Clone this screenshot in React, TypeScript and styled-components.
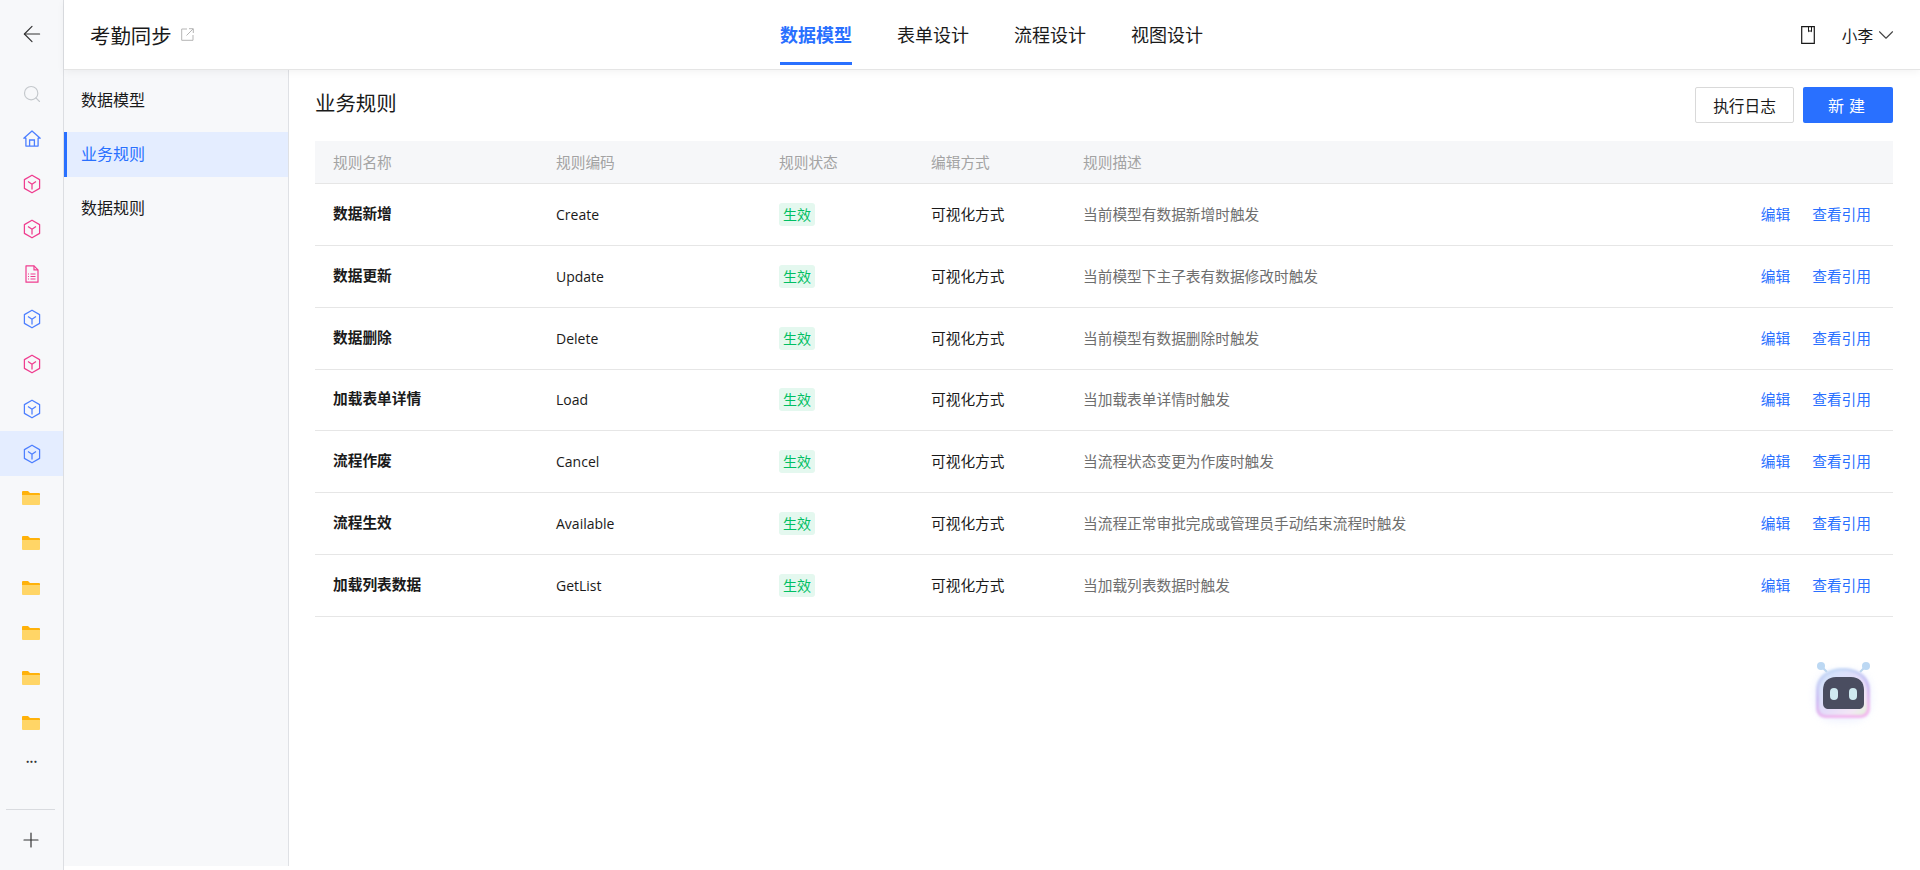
import React from "react";
import styled, { createGlobalStyle } from "styled-components";
import { ArrowLeft, ChevronDown, Plus, Search } from "lucide-react";

const GlobalStyle = createGlobalStyle`
  html, body {
    margin: 0;
    padding: 0;
    height: 100%;
    overflow: hidden;
    background: #fff;
  }
  * { box-sizing: border-box; }
  body {
    font-family: "Noto Sans CJK SC", "Noto Sans", sans-serif;
    color: #1a1a1a;
  }
`;

const Shell = styled.div`
  display: flex;
  width: 1920px;
  height: 870px;
  position: relative;
`;

const Rail = styled.aside`
  width: 64px;
  flex: 0 0 64px;
  height: 100%;
  background: #f7f8fa;
  border-right: 1px solid #dcdee2;
  display: flex;
  flex-direction: column;
`;

const BackBox = styled.div`
  height: 71px;
  flex: 0 0 71px;
  padding-bottom: 3px;
  display: flex;
  align-items: center;
  justify-content: center;
  color: #333;
`;

const RailItem = styled.div<{ $active?: boolean }>`
  height: 45px;
  flex: 0 0 45px;
  display: flex;
  align-items: center;
  justify-content: center;
  background: ${(p) => (p.$active ? "#e4edff" : "transparent")};
`;

const RailDots = styled.div`
  height: 30px;
  font-size: 12px;
  font-weight: 700;
  line-height: 30px;
  text-align: center;
  color: #333;
  margin-top: -3px;
`;

const RailLine = styled.div`
  height: 1px;
  margin: 36px 8px 0 6px;
  background: #d9dbdf;
`;

const RailPlus = styled.div`
  display: flex;
  justify-content: center;
  padding: 18px 2px 0 0;
  color: #333;
`;

const Right = styled.div`
  flex: 1;
  display: flex;
  flex-direction: column;
  min-width: 0;
`;

const Header = styled.header`
  height: 70px;
  flex: 0 0 70px;
  background: #fff;
  border-bottom: 1px solid #e5e5e5;
  box-shadow: 0 2px 8px rgba(0, 0, 0, 0.05);
  position: relative;
  z-index: 2;
  display: grid;
  grid-template-columns: 1fr auto 1fr;
  align-items: center;
  padding: 0 27px 0 26px;
`;

const AppName = styled.div`
  display: flex;
  align-items: center;
  gap: 9px;
  font-size: 20.4px;
  color: #1a1a1a;
`;

const Tabs = styled.nav`
  display: flex;
  gap: 45px;
  height: 100%;
`;

const Tab = styled.div<{ $active?: boolean }>`
  height: 65px;
  line-height: 68px;
  font-size: 18px;
  font-weight: ${(p) => (p.$active ? 700 : 400)};
  color: ${(p) => (p.$active ? "#2970ff" : "#1a1a1a")};
  border-bottom: 3px solid ${(p) => (p.$active ? "#2970ff" : "transparent")};
`;

const UserArea = styled.div`
  display: flex;
  justify-content: flex-end;
  align-items: center;
  font-size: 15.6px;
`;

const UserName = styled.span`
  margin-left: 27px;
`;

const Caret = styled.span`
  display: flex;
  margin-right: -6px;
  color: #444;
`;

const Body = styled.div`
  flex: 0 0 796px;
  display: flex;
  min-height: 0;
`;

const SubNav = styled.div`
  width: 225px;
  flex: 0 0 225px;
  background: #f7f8fa;
  border-right: 1px solid #dfe1e5;
  padding-top: 8px;
  display: flex;
  flex-direction: column;
  gap: 9px;
`;

const SubItem = styled.div<{ $active?: boolean }>`
  height: 45px;
  line-height: 43px;
  font-size: 16px;
  padding-left: ${(p) => (p.$active ? "14px" : "17px")};
  color: ${(p) => (p.$active ? "#2970ff" : "#1a1a1a")};
  background: ${(p) => (p.$active ? "#e4edff" : "transparent")};
  border-left: ${(p) => (p.$active ? "3px solid #2970ff" : "none")};
`;

const Content = styled.main`
  flex: 1;
  min-width: 0;
  padding: 17px 27px 0 26px;
`;

const TitleBar = styled.div`
  display: flex;
  align-items: center;
  height: 36px;
  margin-bottom: 18px;
`;

const Title = styled.h2`
  margin: 0 auto 6px 0;
  font-size: 20.4px;
  font-weight: 400;
  line-height: 32px;
  color: #1a1a1a;
`;

const GhostButton = styled.button`
  width: 99px;
  height: 36px;
  padding: 0;
  background: #fff;
  border: 1px solid #d9d9d9;
  border-radius: 2px;
  font: inherit;
  font-size: 15.7px;
  color: #1a1a1a;
`;

const PrimaryButton = styled.button`
  width: 90px;
  height: 36px;
  margin-left: 9px;
  padding: 0 0 0 2px;
  background: #2970ff;
  border: none;
  border-radius: 2px;
  font: inherit;
  font-size: 16px;
  letter-spacing: 5px;
  color: #fff;
`;

const Row = styled.div<{ $head?: boolean }>`
  display: grid;
  grid-template-columns: 223px 223px 152px 152px 1fr auto;
  align-items: center;
  height: ${(p) => (p.$head ? "43px" : "61.85px")};
  padding: 0 22px 2px 18px;
  font-size: 14.7px;
  background: ${(p) => (p.$head ? "#f6f7f9" : "#fff")};
  color: ${(p) => (p.$head ? "#a3a3a3" : "#1a1a1a")};
  border-bottom: 1px solid #e6e6e6;
`;

const RuleName = styled.div`
  font-weight: 700;
  margin-top: -2px;
`;

const RuleCode = styled.div`
  font-family: "Open Sans", "Noto Sans", sans-serif;
  font-size: 14px;
  margin-top: 2px;
`;

const Badge = styled.span`
  display: block;
  width: 36px;
  height: 23px;
  margin-top: 2px;
  line-height: 22px;
  text-align: center;
  font-size: 14px;
  color: #00bf63;
  background: #e4f8ef;
  border-radius: 3px;
`;

const Desc = styled.div`
  color: #6e6e6e;
`;

const Actions = styled.div`
  display: flex;
  gap: 22px;
`;

const LinkAction = styled.a`
  color: #2970ff;
  text-decoration: none;
`;

const Robot = styled.div`
  position: absolute;
  left: 1803px;
  top: 650px;
  width: 80px;
  height: 80px;
`;

const Cube = ({ color }: { color: string }) => (
  <svg width="18" height="20" viewBox="0 0 18 20" fill="none" stroke={color} strokeWidth="1.25">
    <path d="M9 1.2 16.6 5.6V14.4L9 18.8 1.4 14.4V5.6Z" strokeLinejoin="round" />
    <path d="M9 10.2V15.4M9 10.2 5 7.4M9 10.2 13 7.4" />
  </svg>
);

const HomeIcon = () => (
  <svg width="18" height="17" viewBox="0 0 18 17" fill="none" stroke="#4d7fff" strokeWidth="1.3">
    <path d="M.8 8.2 9 .9l8.2 7.3h-2.1v7.9H2.9V8.2Z" strokeLinejoin="round" />
    <path d="M6.6 16V10h4.8v6" />
  </svg>
);

const FileIcon = () => (
  <svg width="14" height="18" viewBox="0 0 14 18" fill="none" stroke="#ef3d8f" strokeWidth="1.2">
    <path d="M1 .8h8l4 4v12.4H1Z" strokeLinejoin="round" />
    <path d="M9 .8v4h4" />
    <path d="M3 9h1M3 11.5h1M3 14h1M5.5 9h5M5.5 11.5h5M5.5 14h5" />
  </svg>
);

const FolderIcon = () => (
  <svg width="18" height="14" viewBox="0 0 18 14" style={{ marginLeft: -2, marginTop: -2 }}>
    <path d="M0 1a1 1 0 0 1 1-1h5l2 2h9a1 1 0 0 1 1 1v2H0Z" fill="#ffb20a" />
    <path d="M0 4h18v9a1 1 0 0 1-1 1H1a1 1 0 0 1-1-1Z" fill="#ffd566" />
  </svg>
);

const ExternalIcon = () => (
  <svg width="13" height="13" viewBox="0 0 13 13" fill="none" stroke="#b5b5b5" strokeWidth="1">
    <path d="M6 1H.7v11.3H12V7" />
    <path d="M5.5 7.5 12 1M8 .7h4.3V5" />
  </svg>
);

const BookIcon = () => (
  <svg width="14" height="18" viewBox="0 0 14 18" fill="none" stroke="#1a1a1a" strokeWidth="1.2">
    <path d="M.7.7h12.6v16.6H.7Z" />
    <path d="M7.5.7v5l1.5-1 1.5 1v-5" strokeWidth="1" />
  </svg>
);

const RobotIcon = () => (
  <svg width="80" height="80" viewBox="0 0 80 80" fill="none">
    <defs>
      <linearGradient id="shell" x1="0" y1="0" x2="1" y2="1">
        <stop offset="0" stopColor="#cfe6fb" />
        <stop offset="0.5" stopColor="#e4dcfa" />
        <stop offset="0.8" stopColor="#f3e6f6" />
        <stop offset="1" stopColor="#e2f6d8" />
      </linearGradient>
      <linearGradient id="rim" x1="0" y1="0" x2="0.3" y2="1">
        <stop offset="0" stopColor="#c5e2f7" />
        <stop offset="0.6" stopColor="#cdbdf3" />
        <stop offset="1" stopColor="#f2b9ee" />
      </linearGradient>
      <filter id="soft" x="-40%" y="-40%" width="180%" height="180%">
        <feGaussianBlur stdDeviation="5" />
      </filter>
      <filter id="edge">
        <feGaussianBlur stdDeviation="0.8" />
      </filter>
    </defs>
    <rect x="13" y="22" width="54" height="48" rx="18" fill="#e3e9ff" opacity="0.75" filter="url(#soft)" />
    <path d="M24 22 18 16M57 22 63 16" stroke="#bcd6ee" strokeWidth="2" />
    <circle cx="18" cy="16" r="4" fill="#bcd8f3" />
    <circle cx="63" cy="16" r="4" fill="#bcd8f3" />
    <path
      d="M13 40C13 26 25 18 40 18s27 8 27 22v18c0 6-4 10-10 10H23c-6 0-10-4-10-10Z"
      fill="url(#rim)"
      filter="url(#edge)"
    />
    <path
      d="M16 41C16 29 27 21 40 21s24 8 24 20v16c0 5-3 8-8 8H24c-5 0-8-3-8-8Z"
      fill="url(#shell)"
      filter="url(#edge)"
    />
    <path d="M20 40c0-8 5-13 13-13h15c8 0 13 5 13 13v13c0 4-2 6-6 6H26c-4 0-6-2-6-6Z" fill="#4a4d60" />
    <rect x="27" y="38" width="8" height="12" rx="4" fill="#cfe9f0" />
    <rect x="46" y="38" width="8" height="12" rx="4" fill="#cfe9f0" />
  </svg>
);

const blue = "#4d7fff";
const pink = "#ef3d8f";

const rules = [
  { name: "数据新增", code: "Create", desc: "当前模型有数据新增时触发" },
  { name: "数据更新", code: "Update", desc: "当前模型下主子表有数据修改时触发" },
  { name: "数据删除", code: "Delete", desc: "当前模型有数据删除时触发" },
  { name: "加载表单详情", code: "Load", desc: "当加载表单详情时触发" },
  { name: "流程作废", code: "Cancel", desc: "当流程状态变更为作废时触发" },
  { name: "流程生效", code: "Available", desc: "当流程正常审批完成或管理员手动结束流程时触发" },
  { name: "加载列表数据", code: "GetList", desc: "当加载列表数据时触发" },
];

const App = () => {
  return (
    <Shell>
      <GlobalStyle />
      <Rail>
        <BackBox>
          <ArrowLeft size={26} strokeWidth={1.1} />
        </BackBox>
        <RailItem>
          <Search size={20} strokeWidth={1.4} color="#c4c8cc" />
        </RailItem>
        <RailItem><HomeIcon /></RailItem>
        <RailItem><Cube color={pink} /></RailItem>
        <RailItem><Cube color={pink} /></RailItem>
        <RailItem><FileIcon /></RailItem>
        <RailItem><Cube color={blue} /></RailItem>
        <RailItem><Cube color={pink} /></RailItem>
        <RailItem><Cube color={blue} /></RailItem>
        <RailItem $active><Cube color={blue} /></RailItem>
        {[0, 1, 2, 3, 4, 5].map((i) => (
          <RailItem key={i}><FolderIcon /></RailItem>
        ))}
        <RailDots>...</RailDots>
        <RailLine />
        <RailPlus>
          <Plus size={24} strokeWidth={1.2} />
        </RailPlus>
      </Rail>
      <Right>
        <Header>
          <AppName>
            考勤同步
            <ExternalIcon />
          </AppName>
          <Tabs>
            <Tab $active>数据模型</Tab>
            <Tab>表单设计</Tab>
            <Tab>流程设计</Tab>
            <Tab>视图设计</Tab>
          </Tabs>
          <UserArea>
            <BookIcon />
            <UserName>小李</UserName>
            <Caret>
              <ChevronDown size={26} strokeWidth={1} />
            </Caret>
          </UserArea>
        </Header>
        <Body>
          <SubNav>
            <SubItem>数据模型</SubItem>
            <SubItem $active>业务规则</SubItem>
            <SubItem>数据规则</SubItem>
          </SubNav>
          <Content>
            <TitleBar>
              <Title>业务规则</Title>
              <GhostButton>执行日志</GhostButton>
              <PrimaryButton>新建</PrimaryButton>
            </TitleBar>
            <Row $head>
              <div>规则名称</div>
              <div>规则编码</div>
              <div>规则状态</div>
              <div>编辑方式</div>
              <div>规则描述</div>
              <div />
            </Row>
            {rules.map((rule) => (
              <Row key={rule.code}>
                <RuleName>{rule.name}</RuleName>
                <RuleCode>{rule.code}</RuleCode>
                <Badge>生效</Badge>
                <div>可视化方式</div>
                <Desc>{rule.desc}</Desc>
                <Actions>
                  <LinkAction>编辑</LinkAction>
                  <LinkAction>查看引用</LinkAction>
                </Actions>
              </Row>
            ))}
          </Content>
        </Body>
      </Right>
      <Robot><RobotIcon /></Robot>
    </Shell>
  );
};

export default App;
